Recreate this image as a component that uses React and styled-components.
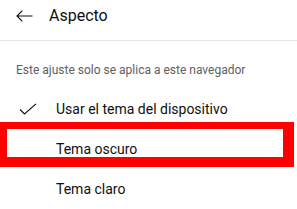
import React from 'react';
import styled, { createGlobalStyle } from 'styled-components';

const GlobalStyle = createGlobalStyle`
    body {
        margin: 0;
        background: #ffffff;
        font-family: Roboto, 'Noto Sans', Arial, sans-serif;
        color: #0f0f0f;
    }
`;

const Panel = styled.div`
    width: 297px;
    height: 209px;
    overflow: hidden;
    background: #ffffff;
`;

const Header = styled.header`
    display: flex;
    align-items: center;
    gap: 16px;
    height: 20px;
    padding: 6px 16px 14px;
    border-bottom: 1px solid #e5e5e5;
`;

const BackButton = styled.button`
    display: flex;
    align-items: center;
    padding: 0;
    border: none;
    background: none;
    cursor: pointer;
`;

const Title = styled.h1`
    margin: 0;
    font-size: 16px;
    line-height: 20px;
    font-weight: 400;
    color: #0f0f0f;
`;

const Note = styled.p`
    margin: 0;
    padding: 21px 16px 11px;
    font-size: 12px;
    line-height: 16px;
    color: #606060;
`;

const Options = styled.ul`
    list-style: none;
    margin: 0;
    padding: 0;
`;

const Option = styled.li`
    position: relative;
    display: flex;
    align-items: center;
    gap: 16px;
    height: 40px;
    padding-left: 16px;
    font-size: 14px;
    color: #0f0f0f;
    cursor: pointer;
`;

const IconSlot = styled.span`
    display: flex;
    align-items: center;
    justify-content: center;
    width: 24px;
    height: 24px;
`;

const Highlight = styled.span`
    position: absolute;
    top: -7px;
    left: 0;
    width: 294px;
    height: 45px;
    box-sizing: border-box;
    border-style: solid;
    border-color: #ff0000;
    border-width: 7px 11px 10px 7px;
    pointer-events: none;
`;

const BackArrow = () => (
    <svg width="17" height="12" viewBox="0 0 17 12" fill="none">
        <path d="M16.5 6H1M6.3 0.7L1 6L6.3 11.3" stroke="#0f0f0f" strokeWidth="1.1" />
    </svg>
);

const Check = () => (
    <svg width="18" height="12" viewBox="0 0 18 12" fill="none">
        <path d="M1 6.5L5.5 11L17 0.8" stroke="#0f0f0f" strokeWidth="1.1" />
    </svg>
);

const themes = [
    { label: 'Usar el tema del dispositivo', selected: true },
    { label: 'Tema oscuro', marked: true },
    { label: 'Tema claro' },
];

const App = () => {
    return (
        <>
            <GlobalStyle />
            <Panel>
                <Header>
                    <BackButton aria-label="Atrás">
                        <BackArrow />
                    </BackButton>
                    <Title>Aspecto</Title>
                </Header>
                <Note>Este ajuste solo se aplica a este navegador</Note>
                <Options>
                    {themes.map((t) => (
                        <Option key={t.label}>
                            <IconSlot>{t.selected && <Check />}</IconSlot>
                            {t.label}
                            {t.marked && <Highlight />}
                        </Option>
                    ))}
                </Options>
            </Panel>
        </>
    );
};

export default App;
